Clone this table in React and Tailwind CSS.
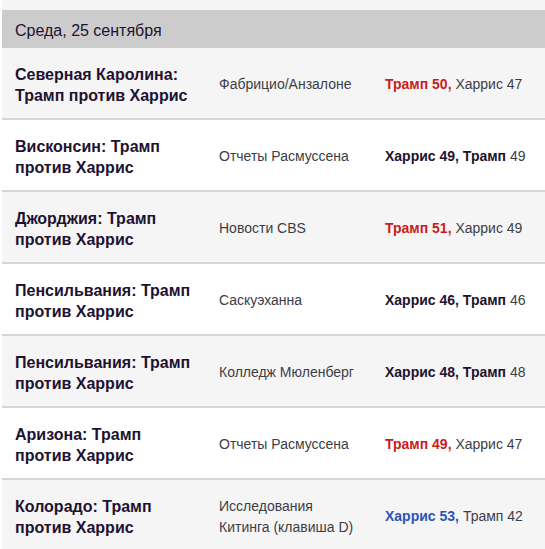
import React from 'react';

const rows = [
  { title: 'Северная Каролина: Трамп против Харрис', source: 'Фабрицио/Анзалоне', win: 'Трамп 50,', rest: 'Харрис 47', tone: 'red' },
  { title: 'Висконсин: Трамп против Харрис', source: 'Отчеты Расмуссена', win: 'Харрис 49, Трамп', rest: '49', tone: 'tie' },
  { title: 'Джорджия: Трамп против Харрис', source: 'Новости CBS', win: 'Трамп 51,', rest: 'Харрис 49', tone: 'red' },
  { title: 'Пенсильвания: Трамп против Харрис', source: 'Саскуэханна', win: 'Харрис 46, Трамп', rest: '46', tone: 'tie' },
  { title: 'Пенсильвания: Трамп против Харрис', source: 'Колледж Мюленберг', win: 'Харрис 48, Трамп', rest: '48', tone: 'tie' },
  { title: 'Аризона: Трамп против Харрис', source: 'Отчеты Расмуссена', win: 'Трамп 49,', rest: 'Харрис 47', tone: 'red' },
  { title: 'Колорадо: Трамп против Харрис', source: 'Исследования Китинга (клавиша D)', win: 'Харрис 53,', rest: 'Трамп 42', tone: 'blue' },
];

const toneClass = {
  red: 'text-[#cc1b1b]',
  blue: 'text-[#2a54b8]',
  tie: 'text-[#1e1230]',
};

function App() {
  return (
    <div className="w-[545px] h-[549px] overflow-hidden bg-white pl-[2px]" style={{ fontFamily: '"Liberation Sans", Arial, sans-serif' }}>
      <div className="h-[10px] bg-[#f5f5f5]" />
      <div className="h-[38px] bg-[#cccccc] flex items-center pl-[13px] pt-[4px] text-[16px] text-[#1e1230]">
        Среда, 25 сентября
      </div>

      {rows.map((r, i) => (
        <div
          key={i}
          className={`h-[72px] grid grid-cols-[204px_166px_1fr] items-center pl-[13px] pt-[3px] border-b-2 border-[#d6d6d6] ${i % 2 === 0 ? 'bg-[#f5f5f6]' : 'bg-white'}`}
        >
          <div className="font-bold text-[16px] leading-[21px] text-[#1e1230] pr-[24px]">{r.title}</div>
          <div className="text-[14px] leading-[21px] text-[#3d3d45] pr-[30px]">{r.source}</div>
          <div className="text-[14px] text-[#3d3d45]">
            <span className={`font-bold ${toneClass[r.tone]}`}>{r.win}</span> {r.rest}
          </div>
        </div>
      ))}
    </div>
  );
}

export default App;
